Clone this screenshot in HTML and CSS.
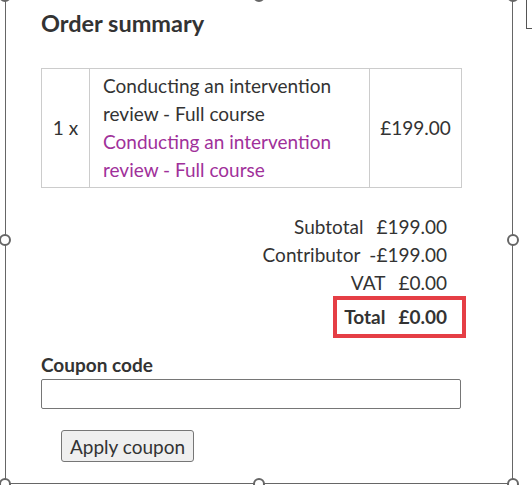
FILE: index.html
```html
<!DOCTYPE html>
<html lang="en">
<head>
<meta charset="utf-8">
<title>Order summary</title>
<link rel="stylesheet" href="styles.css">
</head>
<body>
<div class="frame">
  <span class="handle h-tl"></span>
  <span class="handle h-tm"></span>
  <span class="handle h-tr"></span>
  <span class="handle h-ml"></span>
  <span class="handle h-mr"></span>
  <span class="handle h-bl"></span>
  <span class="handle h-bm"></span>
  <span class="handle h-br"></span>

  <h2 class="title">Order summary</h2>

  <table class="items">
    <colgroup>
      <col class="c-qty">
      <col class="c-name">
      <col class="c-price">
    </colgroup>
    <tr>
      <td class="qty">1 x</td>
      <td class="name">Conducting an intervention review - Full course <span class="link">Conducting an intervention review - Full course</span></td>
      <td class="price">£199.00</td>
    </tr>
  </table>

  <div class="totals">
    <div class="row"><span>Subtotal</span><span>£199.00</span></div>
    <div class="row contrib"><span>Contributor</span><span>-£199.00</span></div>
    <div class="row"><span>VAT</span><span>£0.00</span></div>
    <div class="row total"><span>Total</span><span>£0.00</span></div>
  </div>

  <label class="coupon-label" for="coupon">Coupon code</label>
  <input class="coupon-input" id="coupon" type="text">
  <button class="apply" type="button">Apply coupon</button>
</div>
<div class="side-box"></div>
</body>
</html>
```

FILE: styles.css
```css
html, body {
  margin: 0;
  padding: 0;
  background: #fff;
  overflow: hidden;
}

body {
  width: 532px;
  height: 485px;
  position: relative;
  font-family: Lato, "Open Sans", sans-serif;
  color: #333;
  font-size: 19px;
  line-height: 28px;
}

.frame {
  position: relative;
  box-sizing: border-box;
  margin-left: 5px;
  width: 508px;
  height: 484px;
  border-left: 1px solid #666;
  border-right: 1px solid #666;
  border-bottom: 1px solid #666;
  padding: 8px 0 0 35px;
}

.handle {
  position: absolute;
  box-sizing: border-box;
  width: 12px;
  height: 12px;
  border: 2px solid #666;
  border-radius: 50%;
  background: #fff;
}
.h-tl { left: -7px; top: -10px; }
.h-tm { left: calc(50% - 6px); top: -10px; }
.h-tr { right: -7px; top: -10px; }
.h-ml { left: -7px; top: 234px; }
.h-mr { right: -7px; top: 234px; }
.h-bl { left: -7px; bottom: -7px; }
.h-bm { left: calc(50% - 6px); bottom: -7px; }
.h-br { right: -7px; bottom: -7px; }

.title {
  margin: 0;
  font-size: 23.5px;
  line-height: 30px;
  font-weight: 700;
  color: #333;
}

.items {
  margin-top: 30px;
  width: 421px;
  border-collapse: collapse;
  table-layout: fixed;
}
.c-qty { width: 48px; }
.c-price { width: 92px; }

.items td {
  border: 1px solid #ccc;
  padding: 3px 13px;
  vertical-align: middle;
}
.items td.qty {
  padding: 3px 0;
  white-space: nowrap;
  text-align: center;
}
.items td.price {
  padding: 3px 0;
  white-space: nowrap;
  text-align: center;
}
.name {
  padding-left: 14px;
}
.link {
  color: #a0309a;
}

.totals {
  margin-top: 25px;
  width: 420px;
  display: flex;
  flex-direction: column;
  align-items: flex-end;
}
.row {
  display: flex;
  gap: 13px;
  padding-right: 14px;
}
.row.contrib {
  gap: 9px;
}
.row.total {
  margin-top: -1px;
  margin-right: -5px;
  padding: 3px 15px 3px 7px;
  border: 4px solid #e53e45;
  font-weight: 700;
}

.coupon-label {
  display: block;
  margin-top: 13px;
  font-weight: 700;
  line-height: 28px;
}

.coupon-input {
  display: block;
  box-sizing: border-box;
  width: 420px;
  height: 30px;
  margin: 0;
  border: 1px solid #767676;
  border-radius: 2px;
  font: inherit;
}

.apply {
  display: block;
  box-sizing: border-box;
  margin: 21px 0 0 20px;
  height: 32px;
  padding: 0 8px;
  font-family: inherit;
  font-size: 19px;
  color: #333;
  background: #efefef;
  border: 1px solid #767676;
  border-radius: 3px;
}

.side-box {
  position: absolute;
  left: 526px;
  top: -10px;
  width: 30px;
  height: 39px;
  box-sizing: border-box;
  border: 1px solid #555;
}
```
